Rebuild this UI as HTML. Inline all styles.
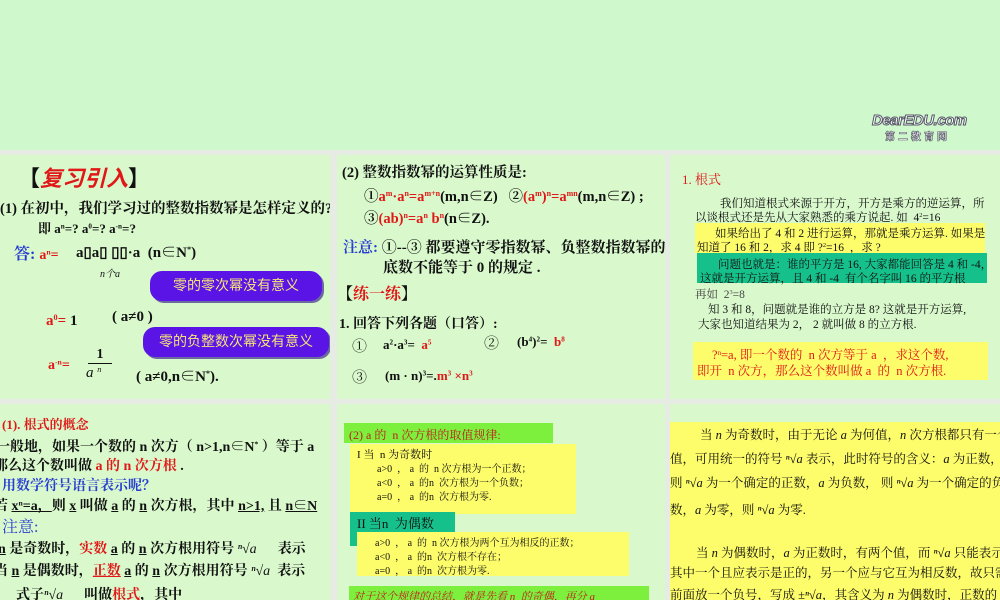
<!DOCTYPE html>
<html><head><meta charset="utf-8"><style>
*{margin:0;padding:0;box-sizing:border-box}
body{width:1000px;height:600px;overflow:hidden;background:#e6ebe4;position:relative;font-family:"Liberation Serif","Noto Serif CJK SC",serif;color:#111}
.a{position:absolute;white-space:nowrap}
.p{position:absolute;background:#d9f9cd;overflow:hidden}
.r{color:#e01818}.b{color:#2a3fd0}
.y{position:absolute;background:#fdfc6a}
.g{position:absolute;background:#7cf03c}
.t{position:absolute;background:#16c08a}
.s{font-size:0.55em;vertical-align:0.6em;line-height:0}
.bold{font-weight:bold}
.u{text-decoration:underline}
.bub{position:absolute;background:#5a14e6;color:#f6e27a;border-radius:12px;font-family:"Liberation Sans","Noto Sans CJK SC",sans-serif;font-size:14px;text-align:center;box-shadow:2px 2px 0 #6a6aa0}
</style></head><body>
<div class="p" style="left:0;top:0;width:1000px;height:150px;background:#cff8cc"></div>
<div class="a" style="left:872px;top:112px;font:bold italic 15px 'Liberation Sans',sans-serif;color:#fff;-webkit-text-stroke:1px #556;letter-spacing:-0.5px">DearEDU.com</div>
<div class="a" style="left:885px;top:128px;font:bold 10px 'Noto Sans CJK SC',sans-serif;color:#fff;-webkit-text-stroke:0.6px #556;letter-spacing:3px">第二教育网</div>

<!-- panel 1 -->
<div class="p" style="left:0;top:155px;width:330px;height:244px">
<div class="a bold" style="left:18px;top:6px;font-size:22px;font-family:'Noto Sans CJK SC',sans-serif">【<span class="r" style="font-style:italic">复习引入</span>】</div>
<div class="a bold" style="left:0;top:42px;font-size:14.5px">(1) 在初中，我们学习过的整数指数幂是怎样定义的?</div>
<div class="a bold" style="left:38px;top:63px;font-size:13px">即 a<span class="s">n</span>=? a<span class="s">0</span>=? a<span class="s">-n</span>=?</div>
<div class="a bold" style="left:14px;top:86px;font-size:16px"><span class="b">答:</span> <span class="r" style="font-size:14px">a<span class="s">n</span>=</span></div>
<div class="a bold" style="left:76px;top:86px;font-size:15px">a▯a▯ ▯▯·a &nbsp;(n∈N<span class="s">*</span>)</div>
<div class="a" style="left:100px;top:110px;font-size:10px;font-style:italic">n个a</div>
<div class="bub" style="left:150px;top:116px;width:172px;height:30px;line-height:28px">零的零次幂没有意义</div>
<div class="a bold" style="left:46px;top:158px;font-size:15px"><span class="r">a<span class="s">0</span>=</span> 1</div>
<div class="a bold" style="left:112px;top:154px;font-size:15px">( a≠0 )</div>
<div class="bub" style="left:143px;top:172px;width:186px;height:30px;line-height:28px">零的负整数次幂没有意义</div>
<div class="a bold r" style="left:48px;top:203px;font-size:14px">a<span class="s">-n</span>=</div>
<div class="a bold" style="left:88px;top:192px;font-size:14px;text-align:center;width:24px;border-bottom:1px solid #111">1</div>
<div class="a" style="left:86px;top:210px;font-size:15px;font-style:italic">a <span class="s">n</span></div>
<div class="a bold" style="left:136px;top:210px;font-size:15px">( a≠0,n∈N<span class="s">*</span>).</div>
</div>

<!-- panel 2 -->
<div class="p" style="left:337px;top:155px;width:328px;height:244px">
<div class="a bold" style="left:5px;top:6px;font-size:14.5px">(2) 整数指数幂的运算性质是:</div>
<div class="a bold" style="left:27px;top:30px;font-size:14.5px">①<span class="r">a<span class="s">m</span>·a<span class="s">n</span>=a<span class="s">m+n</span></span>(m,n∈Z) &nbsp; ②<span class="r">(a<span class="s">m</span>)<span class="s">n</span>=a<span class="s">mn</span></span>(m,n∈Z) ;</div>
<div class="a bold" style="left:27px;top:52px;font-size:14.5px">③<span class="r">(ab)<span class="s">n</span>=a<span class="s">n</span> b<span class="s">n</span></span>(n∈Z).</div>
<div class="a bold" style="left:6px;top:81px;font-size:15px"><span class="b">注意:</span> ①--③ 都要遵守零指数幂、负整数指数幂的</div>
<div class="a bold" style="left:46px;top:101px;font-size:15px">底数不能等于 0 的规定 .</div>
<div class="a bold" style="left:0;top:126px;font-size:16px">【<span class="r">练一练</span>】</div>
<div class="a bold" style="left:2px;top:158px;font-size:14px">1. 回答下列各题（口答）:</div>
<div class="a" style="left:15px;top:180px;font-size:15px">①</div>
<div class="a bold" style="left:46px;top:182px;font-size:13px">a<span class="s">2</span>·a<span class="s">3</span>= &nbsp;<span class="r">a<span class="s">5</span></span></div>
<div class="a" style="left:147px;top:177px;font-size:15px">②</div>
<div class="a bold" style="left:180px;top:179px;font-size:13px">(b<span class="s">4</span>)<span class="s">2</span>= &nbsp;<span class="r">b<span class="s">8</span></span></div>
<div class="a" style="left:15px;top:211px;font-size:15px">③</div>
<div class="a bold" style="left:48px;top:213px;font-size:13px">(m · n)<span class="s">3</span>=.<span class="r">m<span class="s">3</span> ×n<span class="s">3</span></span></div>
</div>

<!-- panel 3 -->
<div class="p" style="left:670px;top:155px;width:330px;height:244px">
<div class="a r" style="left:12px;top:14px;font-size:13px">1. 根式</div>
<div class="a" style="left:50px;top:40px;font-size:11.5px">我们知道根式来源于开方，开方是乘方的逆运算，所</div>
<div class="a" style="left:25px;top:54px;font-size:11.5px">以谈根式还是先从大家熟悉的乘方说起. 如 &nbsp;4<span class="s">2</span>=16</div>
<div class="y" style="left:25px;top:68px;width:290px;height:30px"></div>
<div class="a" style="left:45px;top:70px;font-size:11.5px">如果给出了 4 和 2 进行运算，那就是乘方运算. 如果是</div>
<div class="a" style="left:27px;top:84px;font-size:11.5px">知道了 16 和 2，求 4 即 ?<span class="s">2</span>=16 &nbsp;，求 ?</div>
<div class="t" style="left:27px;top:98px;width:290px;height:30px"></div>
<div class="a" style="left:48px;top:101px;font-size:11.5px">问题也就是：谁的平方是 16, 大家都能回答是 4 和 -4，</div>
<div class="a" style="left:30px;top:115px;font-size:11.5px">这就是开方运算，且 4 和 -4 &nbsp;有个名字叫 16 的平方根</div>
<div class="a" style="left:25px;top:131px;font-size:11.5px;color:#444">再如 &nbsp;2<span class="s">3</span>=8</div>
<div class="a" style="left:38px;top:146px;font-size:11.5px">知 3 和 8，问题就是谁的立方是 8? 这就是开方运算,</div>
<div class="a" style="left:28px;top:161px;font-size:11.5px">大家也知道结果为 2， 2 就叫做 8 的立方根.</div>
<div class="y" style="left:23px;top:187px;width:295px;height:38px"></div>
<div class="a r" style="left:42px;top:190px;font-size:12.5px">?<span class="s">n</span>=a, 即一个数的 &nbsp;n 次方等于 a &nbsp;，求这个数,</div>
<div class="a r" style="left:27px;top:206px;font-size:12.5px">即开 &nbsp;n 次方，那么这个数叫做 a &nbsp;的 &nbsp;n 次方根.</div>
</div>

<!-- panel 4 -->
<div class="p" style="left:0;top:404px;width:330px;height:196px">
<div class="a bold r" style="left:2px;top:10px;font-size:13px">(1). 根式的概念</div>
<div class="a bold" style="left:-4px;top:32px;font-size:14px">一般地，如果一个数的 n 次方（ n&gt;1,n∈N<span class="s">*</span> ）等于 a</div>
<div class="a bold" style="left:-6px;top:51px;font-size:14px">那么这个数叫做 <span class="r">a 的 n 次方根</span> .</div>
<div class="a bold b" style="left:2px;top:71px;font-size:14px">用数学符号语言表示呢？</div>
<div class="a bold" style="left:-6px;top:91px;font-size:14px">若 <span class="u">x<span class="s">n</span>=a</span><span class="u">，</span>则 <span class="u">x</span> 叫做 <span class="u">a</span> 的 <span class="u">n</span> 次方根，其中 <span class="u">n&gt;1,</span> 且 <span class="u">n∈N</span></div>
<div class="a b" style="left:2px;top:110px;font-size:16px">注意:</div>
<div class="a bold" style="left:-2px;top:134px;font-size:14px"><span class="u">n</span> 是奇数时，<span class="r">实数</span> <span class="u">a</span> 的 <span class="u">n</span> 次方根用符号 <i style="font-weight:normal">ⁿ√a</i> &nbsp;&nbsp;&nbsp;&nbsp; 表示</div>
<div class="a bold" style="left:-6px;top:156px;font-size:14px">当 <span class="u">n</span> 是偶数时，<span class="r u">正数</span> <span class="u">a</span> 的 <span class="u">n</span> 次方根用符号 <i style="font-weight:normal">ⁿ√a</i> &nbsp;表示</div>
<div class="a bold" style="left:16px;top:180px;font-size:14px">式子<i style="font-weight:normal">ⁿ√a</i> &nbsp;&nbsp;&nbsp;&nbsp; 叫做<span class="r">根式</span>，其中</div>
</div>

<!-- panel 5 -->
<div class="p" style="left:337px;top:404px;width:328px;height:196px">
<div class="g" style="left:7px;top:19px;width:209px;height:20px"></div>
<div class="a" style="left:12px;top:22px;font-size:12px;color:#c02020">(2) a 的 &nbsp;n 次方根的取值规律:</div>
<div class="y" style="left:13px;top:40px;width:226px;height:70px"></div>
<div class="a" style="left:20px;top:42px;font-size:11px">I 当 &nbsp;n 为奇数时</div>
<div class="a" style="left:40px;top:56px;font-size:10px">a&gt;0 &nbsp;， a &nbsp;的 &nbsp;n 次方根为一个正数；</div>
<div class="a" style="left:40px;top:70px;font-size:10px">a&lt;0 &nbsp;， a &nbsp;的n &nbsp;次方根为一个负数；</div>
<div class="a" style="left:40px;top:84px;font-size:10px">a=0 &nbsp;， a &nbsp;的n &nbsp;次方根为零.</div>
<div class="t" style="left:13px;top:108px;width:105px;height:34px"></div>
<div class="a" style="left:20px;top:109px;font-size:13px">II 当n &nbsp;为偶数</div>
<div class="y" style="left:20px;top:128px;width:272px;height:44px"></div>
<div class="a" style="left:38px;top:130px;font-size:10px">a&gt;0 &nbsp;， a &nbsp;的 &nbsp;n 次方根为两个互为相反的正数；</div>
<div class="a" style="left:38px;top:144px;font-size:10px">a&lt;0 &nbsp;， a &nbsp;的n &nbsp;次方根不存在；</div>
<div class="a" style="left:38px;top:158px;font-size:10px">a=0 &nbsp;， a &nbsp;的n &nbsp;次方根为零.</div>
<div class="g" style="left:12px;top:182px;width:300px;height:20px"></div>
<div class="a" style="left:16px;top:184px;font-size:11px;color:#c02020;font-style:italic">对于这个规律的总结，就是先看 n &nbsp;的奇偶，再分 a</div>
</div>

<!-- panel 6 -->
<div class="p" style="left:670px;top:404px;width:330px;height:196px">
<div class="y" style="left:0;top:18px;width:330px;height:180px"></div>
<div class="a" style="left:30px;top:21px;font-size:12.5px">当 <i>n</i> 为奇数时，由于无论 <i>a</i> 为何值，<i>n</i> 次方根都只有一个</div>
<div class="a" style="left:0;top:45px;font-size:12.5px">值，可用统一的符号 <i>ⁿ√a</i> 表示，此时符号的含义：<i>a</i> 为正数，</div>
<div class="a" style="left:0;top:69px;font-size:12.5px">则 <i>ⁿ√a</i> 为一个确定的正数，<i>a</i> 为负数， 则 <i>ⁿ√a</i> 为一个确定的负</div>
<div class="a" style="left:0;top:96px;font-size:12.5px">数，<i>a</i> 为零，则 <i>ⁿ√a</i> 为零.</div>
<div class="a" style="left:26px;top:139px;font-size:12.5px">当 <i>n</i> 为偶数时，<i>a</i> 为正数时，有两个值，而 <i>ⁿ√a</i> 只能表示</div>
<div class="a" style="left:0;top:159px;font-size:12.5px">其中一个且应表示是正的，另一个应与它互为相反数，故只需在</div>
<div class="a" style="left:0;top:181px;font-size:12.5px">前面放一个负号，写成 ±<i>ⁿ√a</i>，其含义为 <i>n</i> 为偶数时，正数的 <i>n</i></div>
</div>
</body></html>
